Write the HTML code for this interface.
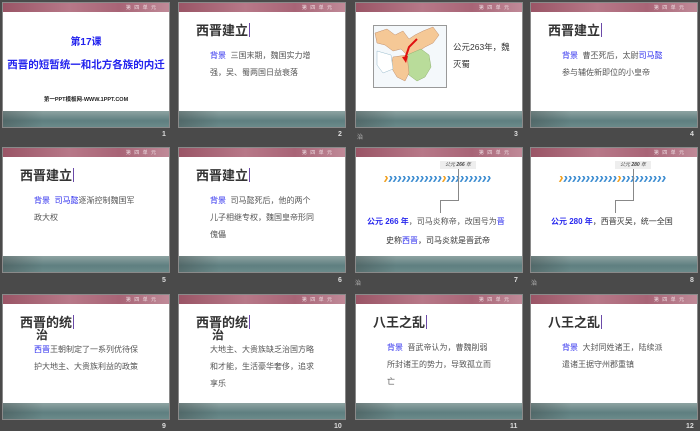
<!DOCTYPE html>
<html><head><meta charset="utf-8"><style>
*{margin:0;padding:0;box-sizing:border-box}
body{width:700px;height:431px;background:#4a4a4a;position:relative;overflow:hidden;font-family:"Liberation Sans","Noto Sans CJK SC",sans-serif}
.s{position:absolute;width:168px;height:126px;background:#fff;border:1px solid #8a8a8a;overflow:hidden}
.top{position:absolute;left:0;top:0;right:0;height:9px;background:linear-gradient(90deg,#9a5566,#b77888 40%,#a86476 70%,#c08a98)}
.top i{position:absolute;right:12px;top:1px;font-style:normal;font-size:5px;color:#eedde2;letter-spacing:1px}
.bot{position:absolute;left:0;bottom:0;right:0;height:16px;background:linear-gradient(180deg,#8ea3a2,#5f7f80 60%,#6a8a8a);}
.bot:before{content:"";position:absolute;left:0;top:0;width:40px;height:16px;background:linear-gradient(90deg,rgba(60,70,70,.4),rgba(0,0,0,0))}
.t{position:absolute;font-size:13px;color:#333;font-weight:bold;left:17px;top:17px;white-space:nowrap}
.t:after{content:"";display:inline-block;width:1px;height:14px;background:#6b4aa8;vertical-align:-2px;margin-left:1px}
.b{position:absolute;font-size:8px;color:#555;line-height:17px;white-space:nowrap}
.k{color:#2a2aee}
.n{position:absolute;font-size:7px;color:#ddd;font-weight:bold}
.sm{position:absolute;font-size:6px;color:#bbb}
.arr{position:absolute;height:6px;font-size:7px;line-height:6px;color:#3a8bd0;font-weight:bold;letter-spacing:-1.4px;white-space:nowrap;overflow:hidden}
.arr b{color:#f0a020}
</style></head><body>

<!-- row1 -->
<div class="s" style="left:2px;top:2px"><div class="top"><i>第 四 单 元</i></div>
<div style="position:absolute;left:0;right:0;top:30px;text-align:center;font-size:10px;font-weight:bold;color:#2222ee">第17课</div>
<div style="position:absolute;left:0;right:0;top:54px;text-align:center;font-size:10.5px;font-weight:bold;color:#2222ee">西晋的短暂统一和北方各族的内迁</div>
<div style="position:absolute;left:0;right:0;top:92px;text-align:center;font-size:5.5px;font-weight:bold;color:#222">第一PPT模板网-WWW.1PPT.COM</div>
<div class="bot"></div></div>
<div class="n" style="left:162px;top:131px">1</div>

<div class="s" style="left:178px;top:2px"><div class="top"><i>第 四 单 元</i></div>
<div class="t">西晋建立</div>
<div class="b" style="left:31px;top:44px"><span class="k">背景</span>&nbsp; 三国末期，魏国实力增<br>强，吴、蜀两国日益衰落</div>
<div class="bot"></div></div>
<div class="n" style="left:338px;top:131px">2</div>

<div class="s" style="left:355px;top:2px"><div class="top"><i>第 四 单 元</i></div>
<svg style="position:absolute;left:17px;top:22px" width="74" height="63" viewBox="0 0 74 63">
<rect x="0.5" y="0.5" width="73" height="62" fill="#f4f8fb" stroke="#999"/>
<path d="M2 8 L14 4 L22 10 L30 6 L36 14 L42 10 L50 6 L60 2 L66 10 L60 18 L52 22 L46 26 L40 32 L34 30 L28 24 L20 26 L12 20 L4 18Z" fill="#f5c896" stroke="#c09070" stroke-width=".5"/>
<path d="M34 30 L48 24 L56 30 L58 42 L52 52 L44 56 L36 50 L32 40Z" fill="#b9dc9a" stroke="#90b070" stroke-width=".5"/>
<path d="M20 32 L34 30 L36 48 L32 56 L24 52 L18 42Z" fill="#f5c896" stroke="#c09070" stroke-width=".5"/>
<path d="M4 26 L18 30 L20 44 L10 48 L4 40Z" fill="#fff" stroke="#9bc" stroke-width=".5"/>
<path d="M44 14 L36 22 L32 34" fill="none" stroke="#e01010" stroke-width="2"/>
<path d="M29 32 L33 38 L35 31Z" fill="#e01010"/>
</svg>
<div class="b" style="left:97px;top:36px;color:#333;font-size:8.5px">公元263年，魏<br>灭蜀</div>
<div class="bot"></div></div>
<div class="sm" style="left:357px;top:132px">治</div>
<div class="n" style="left:514px;top:131px">3</div>

<div class="s" style="left:530px;top:2px"><div class="top"><i>第 四 单 元</i></div>
<div class="t">西晋建立</div>
<div class="b" style="left:31px;top:44px"><span class="k">背景</span>&nbsp; 曹丕死后，太尉<span class="k">司马懿</span><br>参与辅佐新即位的小皇帝</div>
<div class="bot"></div></div>
<div class="n" style="left:690px;top:131px">4</div>

<!-- row2 -->
<div class="s" style="left:2px;top:147px"><div class="top"><i>第 四 单 元</i></div>
<div class="t">西晋建立</div>
<div class="b" style="left:31px;top:44px"><span class="k">背景</span>&nbsp; <span class="k">司马懿</span>逐渐控制魏国军<br>政大权</div>
<div class="bot"></div></div>
<div class="n" style="left:162px;top:277px">5</div>

<div class="s" style="left:178px;top:147px"><div class="top"><i>第 四 单 元</i></div>
<div class="t">西晋建立</div>
<div class="b" style="left:31px;top:44px"><span class="k">背景</span>&nbsp; 司马懿死后，他的两个<br>儿子相继专权，魏国皇帝形同<br>傀儡</div>
<div class="bot"></div></div>
<div class="n" style="left:338px;top:277px">6</div>

<div class="s" style="left:355px;top:147px"><div class="top"><i>第 四 单 元</i></div>
<div style="position:absolute;left:84px;top:13px;width:36px;height:8px;background:#eee;font-size:5px;color:#444;text-align:center;line-height:8px;font-style:italic">公元 <b>266</b> 年</div>
<div class="arr" style="left:27px;top:28px;width:108px"><b>❯</b>❯❯❯❯❯❯❯❯❯❯❯❯<b>❯</b>❯❯❯❯❯❯❯❯❯❯❯❯❯❯❯❯❯❯❯❯❯❯❯<b>❯</b></div>
<div style="position:absolute;left:102px;top:21px;width:1px;height:32px;background:#888"></div>
<div style="position:absolute;left:84px;top:52px;width:19px;height:1px;background:#888"></div>
<div style="position:absolute;left:84px;top:52px;width:1px;height:13px;background:#888"></div>
<div class="b" style="left:11px;top:65px;font-size:8px;color:#555"><b class="k">公元 266 年</b>，司马炎称帝，改国号为<span class="k">晋</span></div>
<div class="b" style="left:30px;top:84px;font-size:8px;color:#333">史称<span class="k">西晋</span>，司马炎就是晋武帝</div>
<div class="bot"></div></div>
<div class="sm" style="left:355px;top:278px">治</div>
<div class="n" style="left:514px;top:277px">7</div>

<div class="s" style="left:530px;top:147px"><div class="top"><i>第 四 单 元</i></div>
<div style="position:absolute;left:84px;top:13px;width:36px;height:8px;background:#eee;font-size:5px;color:#444;text-align:center;line-height:8px;font-style:italic">公元 <b>280</b> 年</div>
<div class="arr" style="left:27px;top:28px;width:108px"><b>❯</b>❯❯❯❯❯❯❯❯❯❯❯❯<b>❯</b>❯❯❯❯❯❯❯❯❯❯❯❯❯❯❯❯❯❯❯❯❯❯❯<b>❯</b></div>
<div style="position:absolute;left:102px;top:21px;width:1px;height:32px;background:#888"></div>
<div style="position:absolute;left:84px;top:52px;width:19px;height:1px;background:#888"></div>
<div style="position:absolute;left:84px;top:52px;width:1px;height:13px;background:#888"></div>
<div class="b" style="left:20px;top:65px;font-size:8px;color:#333"><b class="k">公元 280 年</b>，西晋灭吴，统一全国</div>
<div class="bot"></div></div>
<div class="sm" style="left:531px;top:278px">治</div>
<div class="n" style="left:690px;top:277px">8</div>

<!-- row3 -->
<div class="s" style="left:2px;top:294px"><div class="top"><i>第 四 单 元</i></div>
<div class="t" style="top:17px">西晋的统</div>
<div style="position:absolute;left:33px;top:31px;font-size:12px;font-weight:bold;color:#333">治</div>
<div class="b" style="left:31px;top:46px"><span class="k">西晋</span>王朝制定了一系列优待保<br>护大地主、大贵族利益的政策</div>
<div class="bot"></div></div>
<div class="n" style="left:162px;top:423px">9</div>

<div class="s" style="left:178px;top:294px"><div class="top"><i>第 四 单 元</i></div>
<div class="t" style="top:17px">西晋的统</div>
<div style="position:absolute;left:33px;top:31px;font-size:12px;font-weight:bold;color:#333">治</div>
<div class="b" style="left:31px;top:46px">大地主、大贵族缺乏治国方略<br>和才能，生活豪华奢侈，追求<br>享乐</div>
<div class="bot"></div></div>
<div class="n" style="left:334px;top:423px">10</div>

<div class="s" style="left:355px;top:294px"><div class="top"><i>第 四 单 元</i></div>
<div class="t">八王之乱</div>
<div class="b" style="left:31px;top:44px"><span class="k">背景</span>&nbsp; 晋武帝认为，曹魏削弱<br>所封诸王的势力，导致孤立而<br>亡</div>
<div class="bot"></div></div>
<div class="n" style="left:510px;top:423px">11</div>

<div class="s" style="left:530px;top:294px"><div class="top"><i>第 四 单 元</i></div>
<div class="t">八王之乱</div>
<div class="b" style="left:31px;top:44px"><span class="k">背景</span>&nbsp; 大封同姓诸王，陆续派<br>遣诸王据守州郡重镇</div>
<div class="bot"></div></div>
<div class="n" style="left:686px;top:423px">12</div>

</body></html>
